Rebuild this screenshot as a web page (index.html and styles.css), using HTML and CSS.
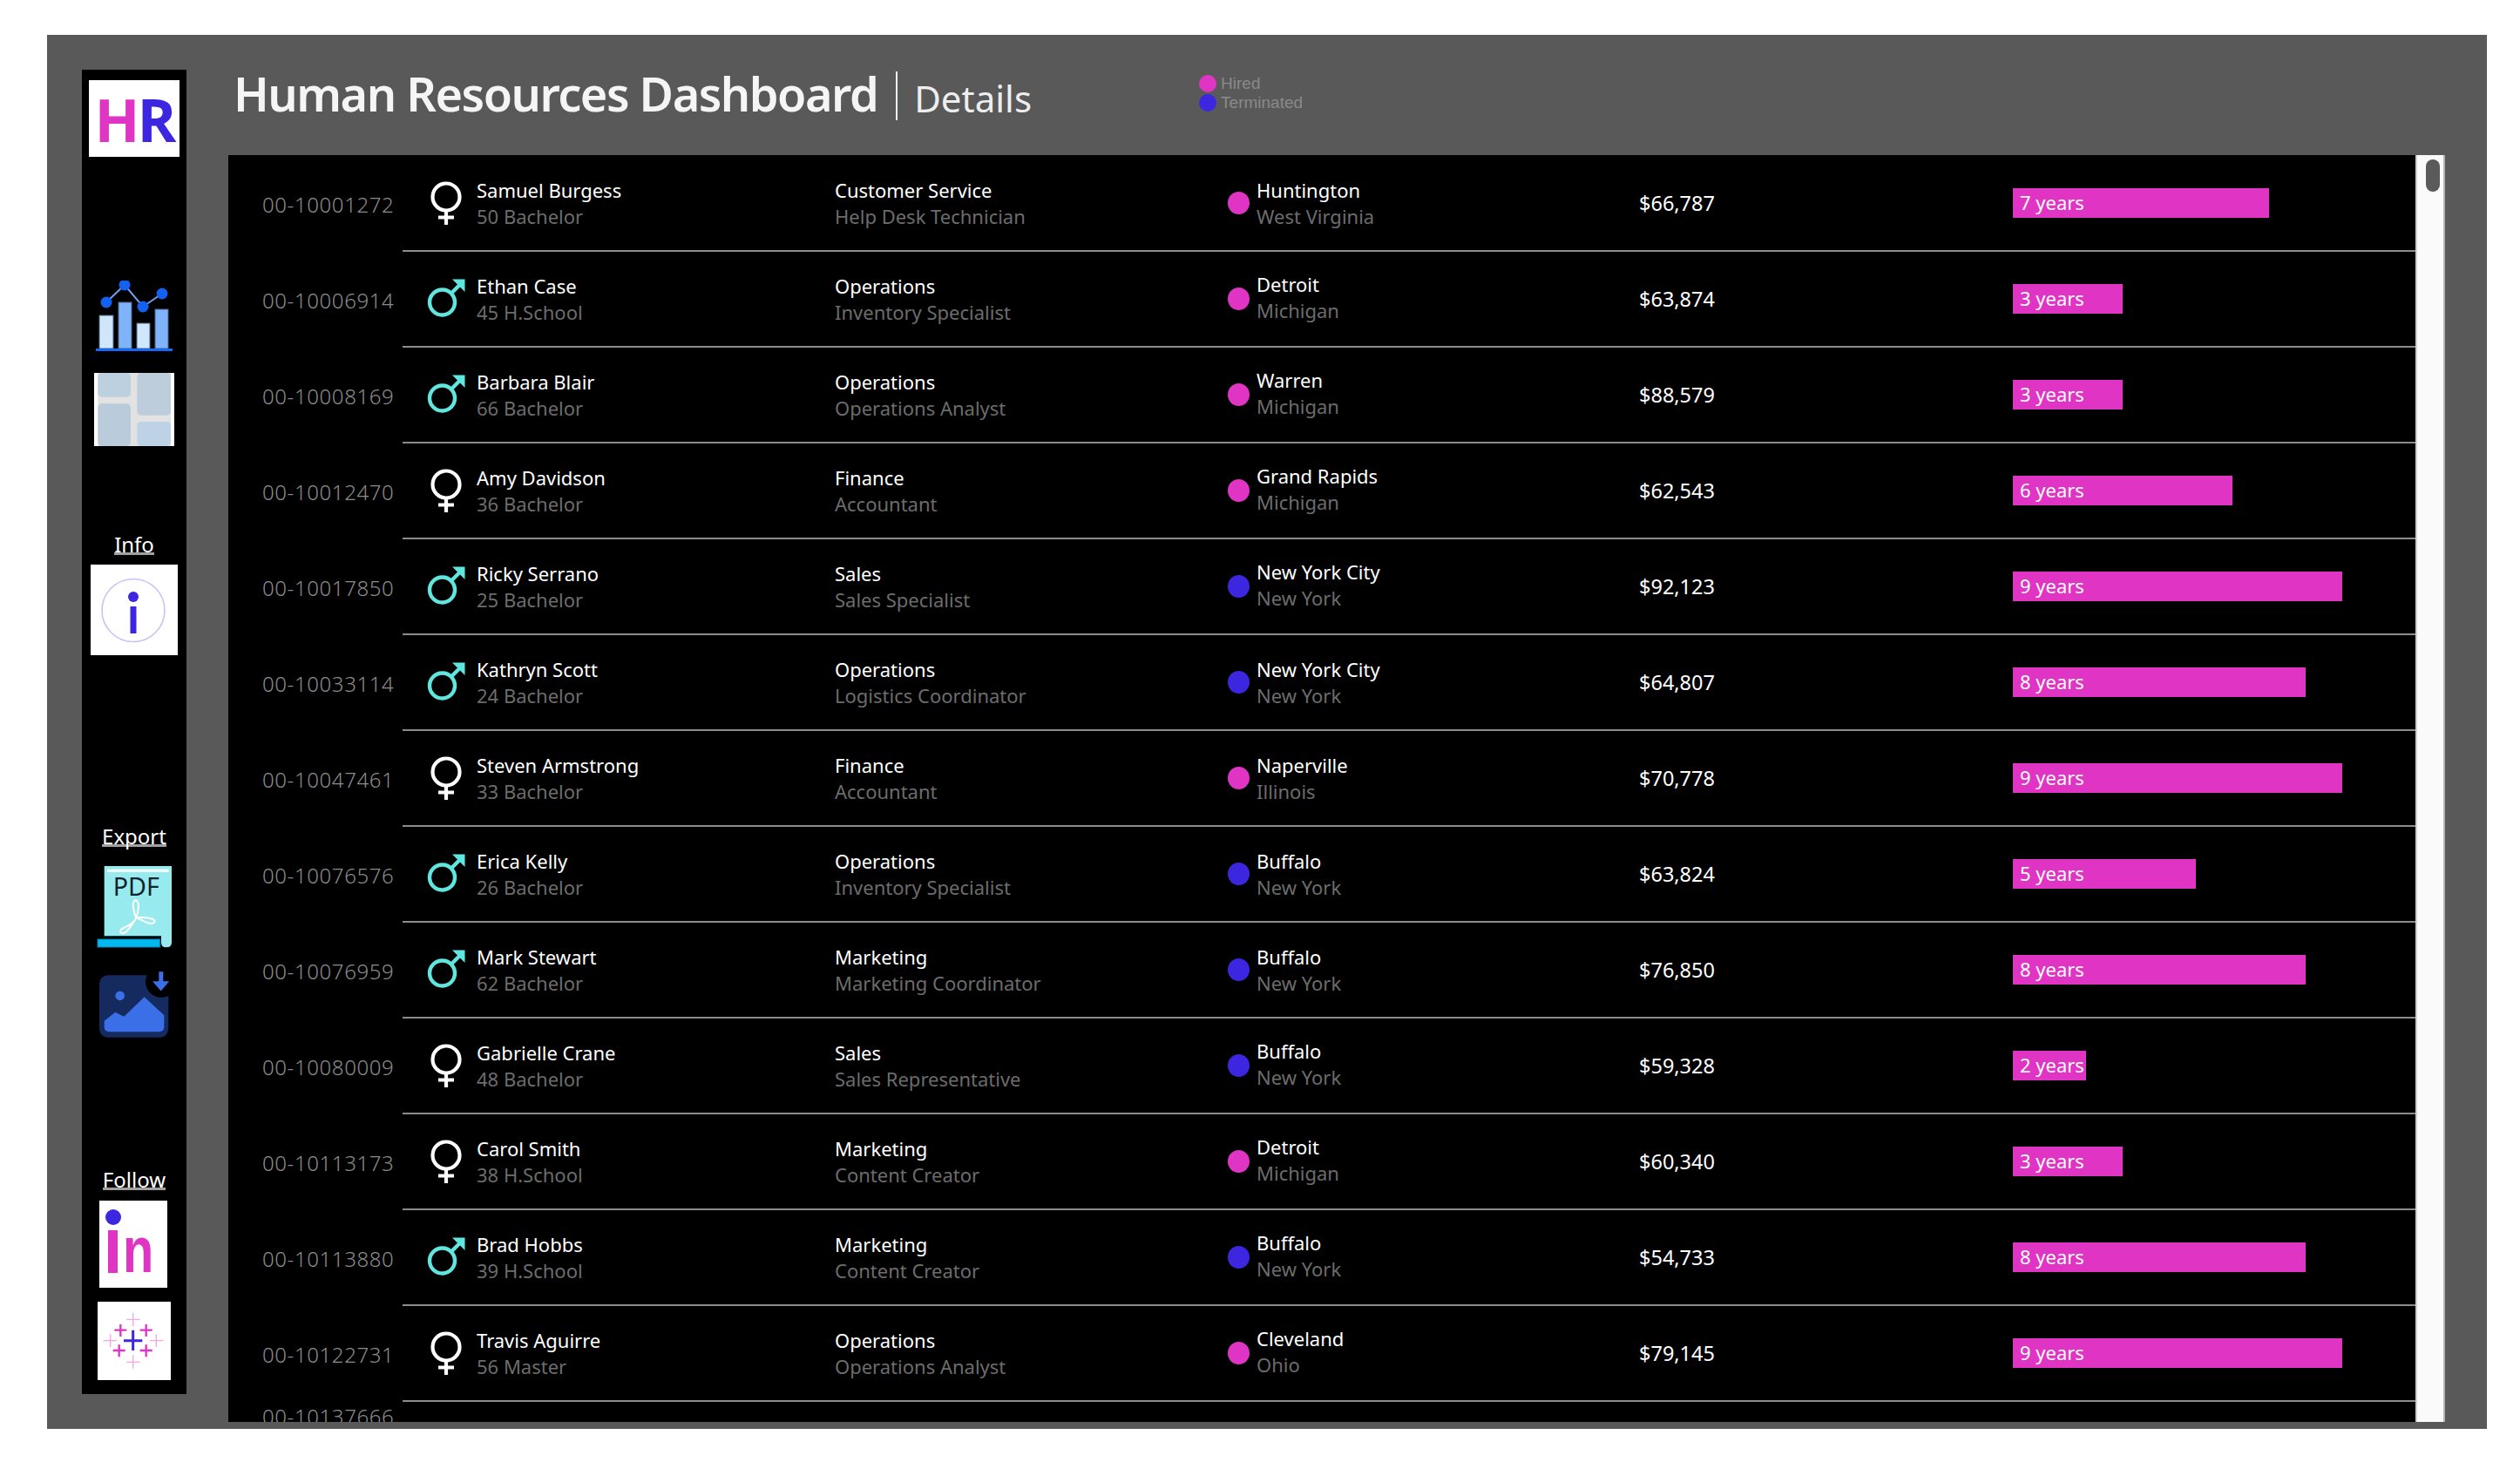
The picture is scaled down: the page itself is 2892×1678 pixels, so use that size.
FILE: index.html
```html
<!DOCTYPE html>
<html lang="en">
  <head>
    <meta charset="UTF-8" />
    <title>Human Resources Dashboard</title>
    <link rel="stylesheet" href="styles.css">
  </head>

  <body>
    <svg class="defs" width="0" height="0">
      <symbol id="female" viewBox="0 0 44 52">
        <circle cx="22" cy="19" r="15.5" fill="none" stroke="#fff" stroke-width="4.2" />
        <path d="M22 35 V51 M13 42.5 H31" fill="none" stroke="#fff" stroke-width="4.2" />
      </symbol>
      <symbol id="male" viewBox="0 0 44 52">
        <circle cx="17.5" cy="30" r="14.5" fill="none" stroke="#5fe7df" stroke-width="4.4" />
        <path d="M27.500 20 L39 8.500" fill="none" stroke="#5fe7df" stroke-width="4.4" />
        <path d="M29 3.500 H43.500 V18 L39.500 14 L33 7.500 Z" fill="#5fe7df" />
      </symbol>
    </svg>

    <div class="frame">
      <!-- left nav -->
      <nav class="sidebar">
        <div class="logo"><span class="logo-h">H</span><span class="logo-r">R</span></div>

        <svg class="chart-icon" viewBox="10 12 88 81">
          <path d="M22 37 L43 17 L64 42 L86 27" fill="none" stroke="#6fa0ee" stroke-width="2" />
          <rect x="14" y="52" width="16" height="38" fill="#cfe6fb" stroke="#4b6788" stroke-width="1" />
          <rect x="36" y="37" width="15" height="53" fill="#80b4fa" stroke="#4b6788" stroke-width="1" />
          <rect x="57" y="61" width="15" height="29" fill="#cfe6fb" stroke="#4b6788" stroke-width="1" />
          <rect x="78" y="45" width="15" height="45" fill="#80b4fa" stroke="#4b6788" stroke-width="1" />
          <rect x="10" y="90" width="88" height="3" fill="#1568f0" />
          <circle cx="22" cy="37" r="6.500" fill="#1261f0" />
          <circle cx="43" cy="17" r="6.500" fill="#1261f0" />
          <circle cx="64" cy="42" r="6.500" fill="#1261f0" />
          <circle cx="86" cy="27" r="6.500" fill="#1261f0" />
        </svg>

        <svg class="grid-icon" viewBox="24 354 276 252">
          <rect x="24" y="354" width="276" height="252" fill="#fff" />
          <rect x="37" y="354" width="251" height="252" fill="#e2e2e2" />
          <rect x="37" y="354" width="113" height="83" rx="14" fill="#bdd0e0" />
          <rect x="172" y="354" width="116" height="146" rx="14" fill="#bdcddb" />
          <rect x="37" y="460" width="113" height="146" rx="14" fill="#bacbdb" />
          <rect x="172" y="522" width="116" height="84" rx="14" fill="#bdd2e4" />
        </svg>

        <div class="nav-label label-info"><span>Info</span></div>
        <svg class="info-icon" viewBox="0 0 100 104">
          <rect width="100" height="104" fill="#fff" />
          <circle cx="49" cy="52.500" r="36" fill="none" stroke="#c8c2f7" stroke-width="1.600" />
          <circle cx="49" cy="37" r="6" fill="#3d26e0" />
          <rect x="45.500" y="48" width="7" height="31" fill="#3d26e0" />
        </svg>

        <div class="nav-label label-export"><span>Export</span></div>
        <svg class="pdf-icon" viewBox="96 282 258 282">
          <path d="M122 282 H354 V545 Q354 562 335 562 Q318 562 318 545 V525 H122 Z" fill="#97ebef" />
          <rect x="132" y="293" width="212" height="10" fill="#f2fbfc" />
          <text x="152" y="384" class="pdf-text">PDF</text>
          <path d="M230 400 C215 400 222 440 232 460 C222 485 195 490 180 500 C170 515 190 520 205 500 C215 490 225 470 232 460 C250 465 280 490 295 475 C300 460 260 458 232 460 C240 440 245 400 230 400 Z" fill="none" stroke="#fff" stroke-width="6" />
          <path d="M122 524 H318" fill="none" stroke="#0d3c4c" stroke-width="4" />
          <rect x="98" y="533" width="217" height="29" fill="#00b8f0" stroke="#0d3c4c" stroke-width="3" />
        </svg>
        <svg class="image-icon" viewBox="105 645 240 227">
          <rect x="105" y="657" width="238" height="215" rx="30" fill="#152a5e" />
          <circle cx="318" cy="680" r="54" fill="#000" />
          <path d="M310 645 H325 V678 H346 L317 712 L288 678 H310 Z" fill="#3b6fe8" />
          <circle cx="176" cy="728" r="16" fill="#3b6fe8" />
          <path d="M122 815 L160 785 L190 800 L260 732 L328 795 V835 Q328 852 310 852 H140 Q122 852 122 835 Z" fill="#3b6fe8" />
        </svg>

        <div class="nav-label label-follow"><span>Follow</span></div>
        <div class="linkedin">
          <div class="li-dot"></div>
          <div class="li-stem"></div>
          <div class="li-n">n</div>
        </div>
        <svg class="tableau-icon" viewBox="96 522 252 270">
          <rect x="96" y="522" width="252" height="270" fill="#fff" />
          <path d="M218 560 V606 M196 583 H242 M218 706 V752 M196 730 H242 M140 634 V678 M116 656 H162 M298 634 V678 M276 656 H322" stroke="#f2a6e2" stroke-width="4" />
          <path d="M175 600 V642 M154 620 H196 M263 600 V642 M242 620 H284 M170 670 V712 M149 690 H191 M263 670 V712 M242 690 H284" stroke="#e034c4" stroke-width="7" />
          <path d="M218 620 V690 M186 656 H250" stroke="#3d26e0" stroke-width="9" />
        </svg>
      </nav>

      <main class="content">
        <header class="page-head">
          <h1 class="title">Human Resources Dashboard</h1>
          <div class="title-sep"></div>
          <div class="subtitle">Details</div>
          <ul class="legend">
            <li><i class="dot-s pink"></i>Hired</li>
            <li><i class="dot-s blue"></i>Terminated</li>
          </ul>
        </header>

        <section class="table-wrap">
          <div class="rows">

            <div class="row">
              <div class="emp-id">00-10001272</div>
              <div class="row-body">
                <svg class="gender"><use href="#female" /></svg>
                <div class="cell name-cell"><b>Samuel Burgess</b><small>50 Bachelor</small></div>
                <div class="cell dept-cell"><b>Customer Service</b><small>Help Desk Technician</small></div>
                <div class="place"><i class="dot pink"></i><div class="cell"><b>Huntington</b><small>West Virginia</small></div></div>
                <div class="salary">$66,787</div>
                <div class="bar" style="width: 294px"><span>7 years</span></div>
              </div>
            </div>

            <div class="row">
              <div class="emp-id">00-10006914</div>
              <div class="row-body">
                <svg class="gender"><use href="#male" /></svg>
                <div class="cell name-cell"><b>Ethan Case</b><small>45 H.School</small></div>
                <div class="cell dept-cell"><b>Operations</b><small>Inventory Specialist</small></div>
                <div class="place up"><i class="dot pink"></i><div class="cell"><b>Detroit</b><small>Michigan</small></div></div>
                <div class="salary">$63,874</div>
                <div class="bar" style="width: 126px"><span>3 years</span></div>
              </div>
            </div>

            <div class="row">
              <div class="emp-id">00-10008169</div>
              <div class="row-body">
                <svg class="gender"><use href="#male" /></svg>
                <div class="cell name-cell"><b>Barbara Blair</b><small>66 Bachelor</small></div>
                <div class="cell dept-cell"><b>Operations</b><small>Operations Analyst</small></div>
                <div class="place up"><i class="dot pink"></i><div class="cell"><b>Warren</b><small>Michigan</small></div></div>
                <div class="salary">$88,579</div>
                <div class="bar" style="width: 126px"><span>3 years</span></div>
              </div>
            </div>

            <div class="row">
              <div class="emp-id">00-10012470</div>
              <div class="row-body">
                <svg class="gender"><use href="#female" /></svg>
                <div class="cell name-cell"><b>Amy Davidson</b><small>36 Bachelor</small></div>
                <div class="cell dept-cell"><b>Finance</b><small>Accountant</small></div>
                <div class="place up"><i class="dot pink"></i><div class="cell"><b>Grand Rapids</b><small>Michigan</small></div></div>
                <div class="salary">$62,543</div>
                <div class="bar" style="width: 252px"><span>6 years</span></div>
              </div>
            </div>

            <div class="row">
              <div class="emp-id">00-10017850</div>
              <div class="row-body">
                <svg class="gender"><use href="#male" /></svg>
                <div class="cell name-cell"><b>Ricky Serrano</b><small>25 Bachelor</small></div>
                <div class="cell dept-cell"><b>Sales</b><small>Sales Specialist</small></div>
                <div class="place up"><i class="dot blue"></i><div class="cell"><b>New York City</b><small>New York</small></div></div>
                <div class="salary">$92,123</div>
                <div class="bar" style="width: 378px"><span>9 years</span></div>
              </div>
            </div>

            <div class="row">
              <div class="emp-id">00-10033114</div>
              <div class="row-body">
                <svg class="gender"><use href="#male" /></svg>
                <div class="cell name-cell"><b>Kathryn Scott</b><small>24 Bachelor</small></div>
                <div class="cell dept-cell"><b>Operations</b><small>Logistics Coordinator</small></div>
                <div class="place"><i class="dot blue"></i><div class="cell"><b>New York City</b><small>New York</small></div></div>
                <div class="salary">$64,807</div>
                <div class="bar" style="width: 336px"><span>8 years</span></div>
              </div>
            </div>

            <div class="row">
              <div class="emp-id">00-10047461</div>
              <div class="row-body">
                <svg class="gender"><use href="#female" /></svg>
                <div class="cell name-cell"><b>Steven Armstrong</b><small>33 Bachelor</small></div>
                <div class="cell dept-cell"><b>Finance</b><small>Accountant</small></div>
                <div class="place"><i class="dot pink"></i><div class="cell"><b>Naperville</b><small>Illinois</small></div></div>
                <div class="salary">$70,778</div>
                <div class="bar" style="width: 378px"><span>9 years</span></div>
              </div>
            </div>

            <div class="row">
              <div class="emp-id">00-10076576</div>
              <div class="row-body">
                <svg class="gender"><use href="#male" /></svg>
                <div class="cell name-cell"><b>Erica Kelly</b><small>26 Bachelor</small></div>
                <div class="cell dept-cell"><b>Operations</b><small>Inventory Specialist</small></div>
                <div class="place"><i class="dot blue"></i><div class="cell"><b>Buffalo</b><small>New York</small></div></div>
                <div class="salary">$63,824</div>
                <div class="bar" style="width: 210px"><span>5 years</span></div>
              </div>
            </div>

            <div class="row">
              <div class="emp-id">00-10076959</div>
              <div class="row-body">
                <svg class="gender"><use href="#male" /></svg>
                <div class="cell name-cell"><b>Mark Stewart</b><small>62 Bachelor</small></div>
                <div class="cell dept-cell"><b>Marketing</b><small>Marketing Coordinator</small></div>
                <div class="place"><i class="dot blue"></i><div class="cell"><b>Buffalo</b><small>New York</small></div></div>
                <div class="salary">$76,850</div>
                <div class="bar" style="width: 336px"><span>8 years</span></div>
              </div>
            </div>

            <div class="row">
              <div class="emp-id">00-10080009</div>
              <div class="row-body">
                <svg class="gender"><use href="#female" /></svg>
                <div class="cell name-cell"><b>Gabrielle Crane</b><small>48 Bachelor</small></div>
                <div class="cell dept-cell"><b>Sales</b><small>Sales Representative</small></div>
                <div class="place up"><i class="dot blue"></i><div class="cell"><b>Buffalo</b><small>New York</small></div></div>
                <div class="salary">$59,328</div>
                <div class="bar" style="width: 84px"><span>2 years</span></div>
              </div>
            </div>

            <div class="row">
              <div class="emp-id">00-10113173</div>
              <div class="row-body">
                <svg class="gender"><use href="#female" /></svg>
                <div class="cell name-cell"><b>Carol Smith</b><small>38 H.School</small></div>
                <div class="cell dept-cell"><b>Marketing</b><small>Content Creator</small></div>
                <div class="place up"><i class="dot pink"></i><div class="cell"><b>Detroit</b><small>Michigan</small></div></div>
                <div class="salary">$60,340</div>
                <div class="bar" style="width: 126px"><span>3 years</span></div>
              </div>
            </div>

            <div class="row">
              <div class="emp-id">00-10113880</div>
              <div class="row-body">
                <svg class="gender"><use href="#male" /></svg>
                <div class="cell name-cell"><b>Brad Hobbs</b><small>39 H.School</small></div>
                <div class="cell dept-cell"><b>Marketing</b><small>Content Creator</small></div>
                <div class="place up"><i class="dot blue"></i><div class="cell"><b>Buffalo</b><small>New York</small></div></div>
                <div class="salary">$54,733</div>
                <div class="bar" style="width: 336px"><span>8 years</span></div>
              </div>
            </div>

            <div class="row">
              <div class="emp-id">00-10122731</div>
              <div class="row-body">
                <svg class="gender"><use href="#female" /></svg>
                <div class="cell name-cell"><b>Travis Aguirre</b><small>56 Master</small></div>
                <div class="cell dept-cell"><b>Operations</b><small>Operations Analyst</small></div>
                <div class="place up"><i class="dot pink"></i><div class="cell"><b>Cleveland</b><small>Ohio</small></div></div>
                <div class="salary">$79,145</div>
                <div class="bar" style="width: 378px"><span>9 years</span></div>
              </div>
            </div>

            <!-- cut off by the bottom of the view -->
            <div class="row row-cut">
              <div class="emp-id">00-10137666</div>
            </div>

          </div>

          <div class="scrollbar"><div class="thumb"></div></div>
        </section>
      </main>
    </div>
  </body>
</html>
```

FILE: styles.css
```css
* {
  box-sizing: border-box;
}

body {
  margin: 0;
  padding: 40px 38px 38px 54px;
  background: #fff;
  font-family: "Noto Sans", sans-serif;
}

.defs {
  display: block;
  height: 0;
}

.frame {
  display: flex;
  gap: 48px;
  width: 2800px;
  height: 1600px;
  padding: 40px 48px 8px 40px;
  background: #595959;
}

/* left nav */
.sidebar {
  display: flex;
  flex-direction: column;
  align-items: center;
  flex: none;
  width: 120px;
  height: 1520px;
  padding-top: 12px;
  background: #000;
}

.sidebar svg {
  display: block;
  flex: none;
}

.logo {
  display: flex;
  align-items: center;
  justify-content: center;
  width: 104px;
  height: 88px;
  background: #fff;
  font-family: "Open Sans", sans-serif;
  font-size: 68px;
  font-weight: 700;
  letter-spacing: -3px;
}

.logo-h {
  color: #e034c4;
}

.logo-r {
  color: #3d26e0;
}

.chart-icon {
  width: 88px;
  height: 81px;
  margin-top: 142px;
}

.grid-icon {
  width: 92px;
  height: 84px;
  margin-top: 25px;
}

.nav-label {
  color: #fff;
  font-size: 24px;
  line-height: 18px;
}

/* text sits low, nearly on the underline */
.nav-label span {
  display: block;
  padding-top: 12px;
  border-bottom: 3px solid #a0a0a0;
}

.label-info {
  margin-top: 92px;
}

.info-icon {
  width: 100px;
  height: 104px;
  margin-top: 11px;
}

.label-export {
  margin-top: 187px;
}

.pdf-icon {
  width: 86px;
  height: 94px;
  margin-top: 22px;
}

.pdf-text {
  font-family: "Noto Sans", sans-serif;
  font-size: 86px;
  fill: #10222c;
}

.image-icon {
  width: 80px;
  height: 76px;
  margin-top: 27px;
}

.label-follow {
  margin-top: 142px;
}

.linkedin {
  position: relative;
  flex: none;
  width: 78px;
  height: 100px;
  margin: 12px 2px 0 0;
  background: #fff;
}

.li-dot {
  position: absolute;
  left: 7px;
  top: 10px;
  width: 18px;
  height: 18px;
  border-radius: 50%;
  background: #3d26e0;
}

.li-stem {
  position: absolute;
  left: 10px;
  top: 34px;
  width: 11px;
  height: 49px;
  background: #e034c4;
}

.li-n {
  position: absolute;
  left: 27px;
  top: 17px;
  color: #e034c4;
  font-family: "Liberation Sans", sans-serif;
  font-size: 74px;
  font-weight: 700;
  line-height: 80px;
  transform: scaleX(0.78);
  transform-origin: left center;
}

.tableau-icon {
  width: 84px;
  height: 90px;
  margin-top: 16px;
}

/* header */
.content {
  display: flex;
  flex-direction: column;
  flex: 1;
  min-width: 0;
}

.page-head {
  display: flex;
  align-items: flex-start;
  flex: none;
  height: 98px;
  padding-left: 6px;
}

.title {
  margin: -2px 0 0 0;
  color: #f5f5f5;
  font-size: 54px;
  font-weight: 600;
  letter-spacing: -1.5px;
  line-height: 58px;
  white-space: nowrap;
}

.title-sep {
  width: 2px;
  height: 56px;
  margin: 2px 19px 0 21px;
  background: #f0f0f0;
}

.subtitle {
  margin-top: 5px;
  color: #eee;
  font-size: 42px;
  line-height: 56px;
}

.legend {
  list-style: none;
  margin: 5px 0 0 192px;
  padding: 0;
  color: #8a8a8a;
  font-family: "Liberation Sans", sans-serif;
  font-size: 19px;
  line-height: 22px;
}

.legend li {
  display: flex;
  align-items: center;
  gap: 5px;
}

.dot-s {
  width: 20px;
  height: 20px;
  border-radius: 50%;
}

.pink {
  background: #e034c4;
}

.blue {
  background: #3d26e0;
}

/* table */
.table-wrap {
  display: flex;
  flex: none;
  height: 1454px;
  overflow: hidden;
  background: #000;
}

.rows {
  flex: 1;
  min-width: 0;
  padding-top: 1px;
}

.row {
  display: flex;
  height: 110px;
}

.row-cut {
  height: 32px;
}

.emp-id {
  display: flex;
  align-items: center;
  flex: none;
  width: 200px;
  padding-left: 39px;
  color: #8c8c8c;
  font-size: 24px;
  font-weight: 300;
  letter-spacing: 0.6px;
}

.row-body {
  display: flex;
  align-items: center;
  flex: 1;
  border-bottom: 2px solid #8c8c8c;
}

.gender {
  flex: none;
  width: 44px;
  height: 52px;
  margin: 0 13px 0 28px;
}

.cell b,
.cell small {
  display: block;
  font-size: 22px;
  line-height: 30px;
  white-space: nowrap;
}

.cell b {
  color: #fff;
  font-weight: 400;
}

.cell small {
  color: #6c6c6c;
}

.name-cell {
  flex: none;
  width: 411px;
}

.dept-cell {
  flex: none;
  width: 451px;
}

.place {
  display: flex;
  align-items: center;
  flex: none;
  gap: 8px;
  width: 472px;
}

.place.up .cell {
  margin-bottom: 4px;
}

.dot {
  flex: none;
  width: 25px;
  height: 26px;
  border-radius: 50%;
}

.salary {
  flex: none;
  width: 429px;
  color: #fff;
  font-size: 23.5px;
}

.bar {
  flex: none;
  height: 34px;
  padding-left: 8px;
  background: #e034c4;
  color: #fff;
  font-size: 22px;
  line-height: 32px;
  white-space: nowrap;
}

/* scroll bar */
.scrollbar {
  flex: none;
  width: 34px;
  padding: 5px 0 0 10px;
  background: #fafafa;
  border-left: 2px solid #cfcfcf;
  border-right: 2px solid #b4b4b4;
}

.thumb {
  width: 16px;
  height: 37px;
  border-radius: 8px;
  background: #5a5a5a;
}
```
